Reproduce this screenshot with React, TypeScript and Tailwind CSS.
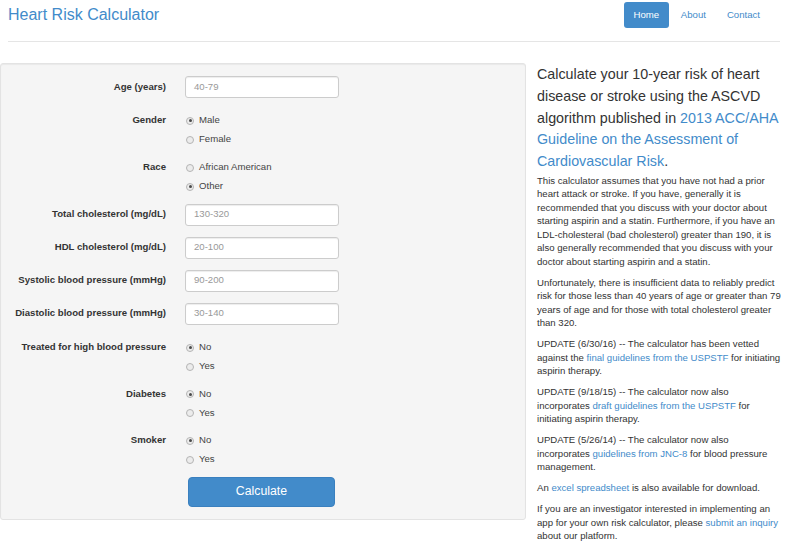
import React from "react";

const font = { fontFamily: '"Liberation Sans", Arial, Helvetica, sans-serif' };

function Radio({ label, checked }: { label: string; checked?: boolean }) {
  return (
    <div className="flex items-center h-[19px]">
      <span className="ml-[1px] w-[8px] h-[8px] rounded-full border border-[#b4b4b4] bg-[#ececec] flex items-center justify-center">
        {checked && <span className="w-[3px] h-[3px] rounded-full bg-[#4a4a4a]" />}
      </span>
      <span className="ml-[5px] text-[9.6px] text-[#444]">{label}</span>
    </div>
  );
}

function InputRow({ label, placeholder, mt }: { label: string; placeholder: string; mt: string }) {
  return (
    <div className={`flex items-center ${mt}`}>
      <div className="w-[165px] text-right font-bold text-[9.6px] text-[#333]">{label}</div>
      <div className="ml-[19px] w-[154px] h-[22px] bg-white border border-[#cccccc] rounded-[3px] shadow-[inset_0_1px_1px_rgba(0,0,0,0.075)] flex items-center px-[8px] text-[9.6px] text-[#999]">
        {placeholder}
      </div>
    </div>
  );
}

function RadioRow({ label, options, mt }: { label: string; options: [string, boolean][]; mt: string }) {
  return (
    <div className={`flex items-start ${mt}`}>
      <div className="w-[165px] h-[19px] flex items-center justify-end font-bold text-[9.6px] text-[#333]">{label}</div>
      <div className="ml-[19px] flex flex-col">
        {options.map(([o, c]) => (
          <Radio key={o} label={o} checked={c} />
        ))}
      </div>
    </div>
  );
}

function A({ children }: { children: React.ReactNode }) {
  return <span className="text-[#428bca]">{children}</span>;
}

export default function App() {
  return (
    <div style={font} className="w-[800px] h-[542px] overflow-hidden bg-white text-[#333]">
      <div className="ml-[8px] w-[772px] pt-[2px] pb-[13px] border-b border-[#e5e5e5] flex items-center justify-between">
        <div className="text-[16px] leading-[26px] text-[#428bca]">Heart Risk Calculator</div>
        <div className="flex items-center mr-[10px] text-[9.6px]">
          <div className="h-[26px] w-[45px] flex items-center justify-center rounded-[3px] bg-[#428bca] text-white">Home</div>
          <div className="ml-[2px] h-[26px] px-[10px] flex items-center text-[#428bca]">About</div>
          <div className="ml-[1px] h-[26px] px-[10px] flex items-center text-[#428bca]">Contact</div>
        </div>
      </div>

      <div className="flex mt-[21px]">
        <div className="w-[526px] h-[457px] bg-[#f5f5f5] border border-[#e3e3e3] rounded-[3px] pt-[12px] shadow-[inset_0_1px_1px_rgba(0,0,0,0.05)]">
          <InputRow label="Age (years)" placeholder="40-79" mt="mt-0" />
          <RadioRow label="Gender" options={[["Male", true], ["Female", false]]} mt="mt-[13px]" />
          <RadioRow label="Race" options={[["African American", false], ["Other", true]]} mt="mt-[9px]" />
          <InputRow label="Total cholesterol (mg/dL)" placeholder="130-320" mt="mt-[7.5px]" />
          <InputRow label="HDL cholesterol (mg/dL)" placeholder="20-100" mt="mt-[11px]" />
          <InputRow label="Systolic blood pressure (mmHg)" placeholder="90-200" mt="mt-[11px]" />
          <InputRow label="Diastolic blood pressure (mmHg)" placeholder="30-140" mt="mt-[11px]" />
          <RadioRow label="Treated for high blood pressure" options={[["No", true], ["Yes", false]]} mt="mt-[13.5px]" />
          <RadioRow label="Diabetes" options={[["No", true], ["Yes", false]]} mt="mt-[8.5px]" />
          <RadioRow label="Smoker" options={[["No", true], ["Yes", false]]} mt="mt-[8.5px]" />
          <div className="flex mt-[7.5px]">
            <div className="ml-[187px] w-[147px] h-[30px] bg-[#428bca] border border-[#3a80bf] rounded-[4px] flex items-center justify-center text-white text-[12.3px]">
              Calculate
            </div>
          </div>
        </div>

        <div className="ml-[11px] w-[246px] mt-[1px]">
          <p className="text-[14.3px] leading-[21.75px] text-[#333] mb-[1px]">
            Calculate your 10-year risk of heart disease or stroke using the ASCVD algorithm published in{" "}
            <A>2013 ACC/AHA Guideline on the Assessment of Cardiovascular Risk</A>.
          </p>
          <div className="text-[9.6px] leading-[13.5px] text-[#333]">
            <p className="mb-[7.5px]">
              This calculator assumes that you have not had a prior heart attack or stroke. If you have, generally it is
              recommended that you discuss with your doctor about starting aspirin and a statin. Furthermore, if you have
              an LDL-cholesteral (bad cholesterol) greater than 190, it is also generally recommended that you discuss with
              your doctor about starting aspirin and a statin.
            </p>
            <p className="mb-[7.5px]">
              Unfortunately, there is insufficient data to reliably predict risk for those less than 40 years of age or
              greater than 79 years of age and for those with total cholesterol greater than 320.
            </p>
            <p className="mb-[7.5px]">
              UPDATE (6/30/16) -- The calculator has been vetted against the <A>final guidelines from the USPSTF</A> for
              initiating aspirin therapy.
            </p>
            <p className="mb-[7.5px]">
              UPDATE (9/18/15) -- The calculator now also incorporates <A>draft guidelines from the USPSTF</A> for
              initiating aspirin therapy.
            </p>
            <p className="mb-[7.5px]">
              UPDATE (5/26/14) -- The calculator now also incorporates <A>guidelines from JNC-8</A> for blood pressure
              management.
            </p>
            <p className="mb-[7.5px]">
              An <A>excel spreadsheet</A> is also available for download.
            </p>
            <p className="mb-[7.5px]">
              If you are an investigator interested in implementing an app for your own risk calculator, please{" "}
              <A>submit an inquiry</A> about our platform.
            </p>
          </div>
        </div>
      </div>
    </div>
  );
}
